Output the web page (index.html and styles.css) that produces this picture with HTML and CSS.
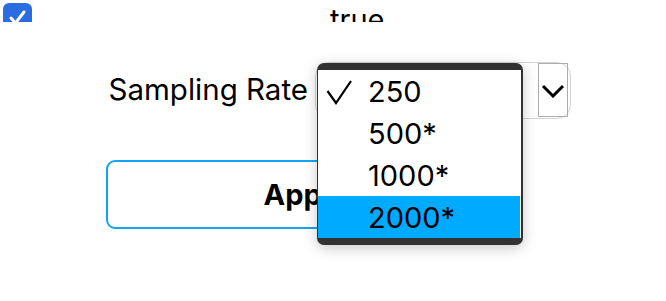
FILE: index.html
```html
<!DOCTYPE html>
<html>
<head>
<meta charset="utf-8">
<link rel="stylesheet" href="styles.css">
</head>
<body>
<div class="page">
  <div class="toprow">
    <span class="cb"><svg width="29" height="29" viewBox="0 0 29 29"><path d="M8 15 L12.5 20 L21 9" fill="none" stroke="#fff" stroke-width="3" stroke-linecap="round" stroke-linejoin="round"/></svg></span>
    <span class="val">true</span>
  </div>
  <div class="field">
    <span class="label">Sampling Rate</span>
    <div class="select">
      <span class="arrowbox"><svg width="24" height="14" viewBox="0 0 24 14"><path d="M2 2 L12 12 L22 2" fill="none" stroke="#000" stroke-width="3"/></svg></span>
    </div>
  </div>
  <div class="btnrow"><button class="apply">Apply</button></div>
</div>
<div class="popup">
  <div class="opt"><svg class="check" width="27" height="25" viewBox="0 0 27 25"><path d="M1.5 11 L10 23 L25 1" fill="none" stroke="#000" stroke-width="2.2"/></svg><span>250</span></div>
  <div class="opt"><span>500*</span></div>
  <div class="opt"><span>1000*</span></div>
  <div class="opt sel"><span>2000*</span></div>
</div>
</body>
</html>
```
FILE: styles.css
```css
html, body {
  margin: 0;
  padding: 0;
  background: #fff;
}
body {
  font-family: Inter, "Liberation Sans", sans-serif;
  color: #000;
  width: 666px;
  height: 301px;
  overflow: hidden;
  position: relative;
}
.toprow {
  height: 22px;
  overflow: hidden;
  display: flex;
  align-items: flex-start;
}
.cb {
  margin: 3px 0 0 3px;
  width: 29px;
  height: 29px;
  border-radius: 6px;
  background: #2b6de0;
  display: block;
}
.cb svg { display: block; }
.val {
  margin-left: 298px;
  font-size: 29px;
  line-height: 1;
  margin-top: 5px;
}
.field {
  margin-top: 40px;
  width: 571px;
  display: flex;
  justify-content: flex-end;
  align-items: center;
  gap: 7px;
}
.label {
  font-size: 29.5px;
  line-height: 1;
  margin-bottom: 2px;
}
.select {
  width: 252px;
  height: 55px;
  border: 1px solid #d4d4d4;
  border-radius: 14px;
  display: flex;
  justify-content: flex-end;
  align-items: flex-start;
  padding: 0 2px 0 0;
}
.arrowbox {
  margin-top: 0;
  width: 28px;
  height: 52px;
  border: 1.5px solid #adadad;
  display: flex;
  align-items: center;
  justify-content: center;
}
.arrowbox svg { display: block; margin-top: 2px; }
.btnrow {
  margin-top: 41px;
  padding-left: 106px;
}
.apply {
  width: 399px;
  height: 69px;
  border: 2px solid #10a6f3;
  border-radius: 9px;
  background: #fff;
  font-family: Inter, "Liberation Sans", sans-serif;
  font-weight: 700;
  font-size: 29px;
  color: #000;
  padding: 0;
}
.popup {
  position: absolute;
  left: 317px;
  top: 63px;
  width: 203px;
  height: 168px;
  background: #fff;
  border-style: solid;
  border-color: #323232;
  border-width: 7px 2px 7px 1px;
  border-radius: 7px;
  box-shadow: 0 3px 14px rgba(0, 0, 0, 0.22);
}
.opt {
  height: 42px;
  display: flex;
  align-items: center;
  padding-left: 50px;
  position: relative;
  font-size: 29px;
  margin-right: 1px;
}
.opt.sel {
  background: #00aaff;
}
.check {
  position: absolute;
  left: 8px;
  top: 10px;
}
```
